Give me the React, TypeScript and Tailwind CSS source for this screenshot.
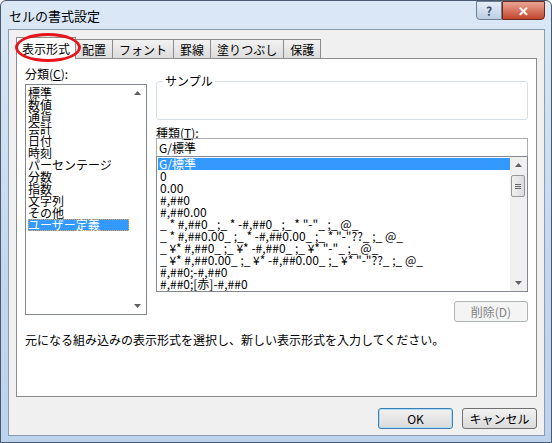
import React from "react";

const cats = ["標準","数値","通貨","会計","日付","時刻","パーセンテージ","分数","指数","文字列","その他","ユーザー定義"];
const fmts = ["G/標準","0","0.00","#,##0","#,##0.00",'_ * #,##0_ ;_ * -#,##0_ ;_ * "-"_ ;_ @_','_ * #,##0.00_ ;_ * -#,##0.00_ ;_ * "-"??_ ;_ @_','_ ¥* #,##0_ ;_ ¥* -#,##0_ ;_ ¥* "-"_ ;_ @_','_ ¥* #,##0.00_ ;_ ¥* -#,##0.00_ ;_ ¥* "-"??_ ;_ @_',"#,##0;-#,##0","#,##0;[赤]-#,##0"];
const tabs = ["表示形式","配置","フォント","罫線","塗りつぶし","保護"];

function Arrow({ up }: { up?: boolean }) {
  return (
    <svg width="7" height="4" viewBox="0 0 7 4"><path d={up ? "M0 4L3.5 0L7 4Z" : "M0 0L3.5 4L7 0Z"} fill="#606060" /></svg>
  );
}

export default function App() {
  return (
    <div className="w-[552px] h-[443px] relative text-[12px] leading-[13px] text-black rounded-t-[6px] border border-[#4a5a6e] overflow-hidden" style={{ fontFamily: '"Noto Sans CJK JP", sans-serif', background: "linear-gradient(180deg,#dbe8f6 0%,#c3d8ef 60%,#bcd3ee 100%)" }}>
      <div className="h-[28px] flex items-center pl-[8px] relative">
        <span className="text-[13px]">セルの書式設定</span>
        <div className="absolute right-[6px] top-0 flex">
          <div className="w-[26px] h-[19px] border border-[#6d7f95] rounded-bl-[4px] bg-gradient-to-b from-[#e6eef8] to-[#bccee4] flex items-center justify-center text-[12px] text-[#3b4f68] font-bold">?</div>
          <div className="w-[43px] h-[19px] border border-[#6b2a20] rounded-br-[4px] bg-gradient-to-b from-[#e8a493] to-[#c2432c] flex items-center justify-center text-white font-bold text-[13px]">✕</div>
        </div>
      </div>
      <div className="absolute left-[7px] top-[28px] w-[537px] h-[407px] bg-[#f0f0f0] border border-[#8a9bb0]">
        <div className="relative mt-[7px] ml-[7px]">
          <div className="flex h-[21px] items-end">
            {tabs.map((t, i) => (
              <div key={t} className={i === 0 ? "h-[22px] px-[5px] bg-white border border-[#8c8c8c] border-b-0 flex items-center z-10 relative -mb-px" : "h-[19px] px-[6px] border border-[#8c8c8c] border-b-0 bg-gradient-to-b from-[#f2f2f2] to-[#dcdcdc] flex items-center -ml-px"}>{t}</div>
            ))}
          </div>
          <div className="w-[521px] h-[339px] bg-white border border-[#8c8c8c] relative">
            <div className="absolute left-[8px] top-[8px]">分類(<u>C</u>):</div>
            <div className="absolute left-[8px] top-[25px] w-[122px] h-[231px] border border-[#828790] flex">
              <div className="flex-1 pl-[2px] pt-[2px]">
                {cats.map((c, i) => (
                  <div key={c} className={"h-[12px] leading-[12px] " + (i === 11 ? "bg-[#3399ff] text-white outline outline-1 outline-dotted outline-[#f9a23c] -outline-offset-1" : "")}>{c}</div>
                ))}
              </div>
              <div className="w-[17px] flex flex-col justify-between items-center py-[6px]"><Arrow up /><Arrow /></div>
            </div>
            <div className="absolute left-[139px] top-[22px] w-[372px] h-[39px] border border-[#d5dfe5] rounded-[3px]">
              <span className="absolute left-[6px] -top-[8px] bg-white px-[2px]">サンプル</span>
            </div>
            <div className="absolute left-[139px] top-[67px]">種類(<u>T</u>):</div>
            <div className="absolute left-[139px] top-[79px] w-[372px] h-[19px] border border-[#abadb3] px-[2px] flex items-center">G/標準</div>
            <div className="absolute left-[139px] top-[97px] w-[372px] h-[136px] border border-[#828790] flex">
              <div className="flex-1 pl-[1px] pt-[1px] whitespace-pre overflow-hidden">
                {fmts.map((f, i) => (
                  <div key={i} className={"h-[12px] leading-[12px] " + (i === 0 ? "bg-[#3399ff] text-white px-[1px]" : "px-[2px]")}>{f}</div>
                ))}
              </div>
              <div className="w-[17px] bg-[#f0f0f0] flex flex-col items-center justify-between py-[6px] relative">
                <Arrow up />
                <div className="absolute top-[18px] left-[1px] w-[14px] h-[22px] border border-[#979797] rounded-[2px] bg-gradient-to-r from-[#f0f0f0] to-[#dcdcdc] flex flex-col items-center justify-center gap-[1px]">
                  <div className="w-[6px] h-px bg-[#666]" /><div className="w-[6px] h-px bg-[#666]" /><div className="w-[6px] h-px bg-[#666]" />
                </div>
                <Arrow />
              </div>
            </div>
            <div className="absolute left-[437px] top-[242px] w-[74px] h-[21px] border border-[#adb2b5] rounded-[3px] bg-[#f4f4f4] text-[#838383] flex items-center justify-center">削除(D)</div>
            <div className="absolute left-[8px] top-[274px]">元になる組み込みの表示形式を選択し、新しい表示形式を入力してください。</div>
          </div>
          <div className="absolute -left-[1px] -top-[4px] w-[66px] h-[29px] rounded-[50%] border-[3px] border-[#e8141b] z-20" />
        </div>
        <div className="absolute right-[7px] bottom-[6px] flex gap-[9px]">
          <div className="w-[75px] h-[21px] rounded-[3px] border border-[#3c7fb1] bg-gradient-to-b from-[#f2f2f2] to-[#dadada] shadow-[inset_0_0_0_1px_#a7dcf6] flex items-center justify-center">OK</div>
          <div className="w-[75px] h-[21px] rounded-[3px] border border-[#707070] bg-gradient-to-b from-[#f2f2f2] to-[#dadada] flex items-center justify-center">キャンセル</div>
        </div>
      </div>
    </div>
  );
}
